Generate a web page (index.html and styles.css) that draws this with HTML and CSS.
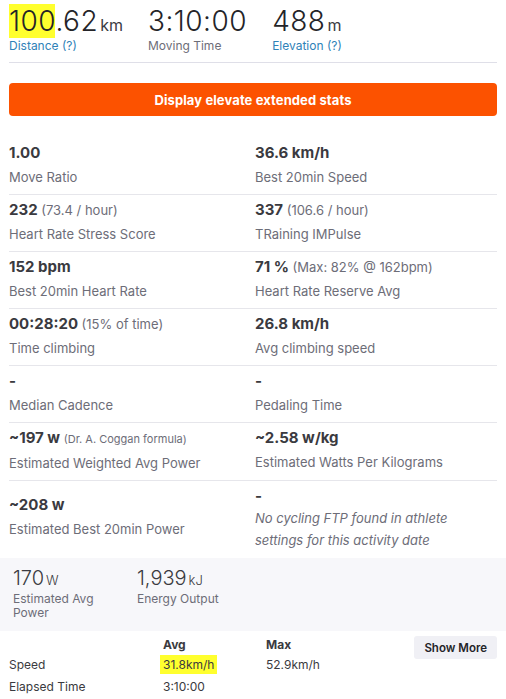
FILE: index.html
```html
<!DOCTYPE html>
<html>
<head>
<meta charset="utf-8">
<link rel="stylesheet" href="styles.css">
</head>
<body>
<div class="page">
  <ul class="top-stats">
    <li class="top-stat">
      <div class="big"><span class="hl">100</span>.62<abbr class="unit">km</abbr></div>
      <div class="top-label link">Distance (?)</div>
    </li>
    <li class="top-stat">
      <div class="big">3:10:00</div>
      <div class="top-label">Moving Time</div>
    </li>
    <li class="top-stat">
      <div class="big">488<abbr class="unit">m</abbr></div>
      <div class="top-label link">Elevation (?)</div>
    </li>
  </ul>

  <button class="elevate-btn">Display elevate extended stats</button>

  <div class="ext-grid">
    <div class="cell"><div class="val">1.00</div><div class="lab">Move Ratio</div></div>
    <div class="cell"><div class="val">36.6 km/h</div><div class="lab">Best 20min Speed</div></div>

    <div class="cell"><div class="val">232 <span class="sub">(73.4 / hour)</span></div><div class="lab">Heart Rate Stress Score</div></div>
    <div class="cell"><div class="val">337 <span class="sub">(106.6 / hour)</span></div><div class="lab">TRaining IMPulse</div></div>

    <div class="cell"><div class="val">152 bpm</div><div class="lab">Best 20min Heart Rate</div></div>
    <div class="cell"><div class="val">71 % <span class="sub">(Max: 82% @ 162bpm)</span></div><div class="lab">Heart Rate Reserve Avg</div></div>

    <div class="cell"><div class="val">00:28:20 <span class="sub">(15% of time)</span></div><div class="lab">Time climbing</div></div>
    <div class="cell"><div class="val">26.8 km/h</div><div class="lab">Avg climbing speed</div></div>

    <div class="cell"><div class="val">-</div><div class="lab">Median Cadence</div></div>
    <div class="cell"><div class="val">-</div><div class="lab">Pedaling Time</div></div>

    <div class="cell"><div class="val">~197 w <span class="sub small">(Dr. A. Coggan formula)</span></div><div class="lab">Estimated Weighted Avg Power</div></div>
    <div class="cell"><div class="val">~2.58 w/kg</div><div class="lab">Estimated Watts Per Kilograms</div></div>

    <div class="cell last middle"><div class="val">~208 w</div><div class="lab">Estimated Best 20min Power</div></div>
    <div class="cell last"><div class="val">-</div><div class="lab italic">No cycling FTP found in athlete settings for this activity date</div></div>
  </div>

  <ul class="secondary">
    <li class="sec-stat">
      <div class="sec-val">170<abbr class="sec-unit">W</abbr></div>
      <div class="sec-lab">Estimated Avg Power</div>
    </li>
    <li class="sec-stat">
      <div class="sec-val">1,939<abbr class="sec-unit">kJ</abbr></div>
      <div class="sec-lab">Energy Output</div>
    </li>
  </ul>

  <div class="splits">
    <div class="split-table">
      <div class="th"></div><div class="th">Avg</div><div class="th">Max</div>
      <div class="td name">Speed</div><div class="td"><span class="hl-small">31.8km/h</span></div><div class="td">52.9km/h</div>
      <div class="td name">Elapsed Time</div><div class="td">3:10:00</div><div class="td"></div>
    </div>
    <button class="more-btn">Show More</button>
  </div>
</div>
</body>
</html>
```

FILE: styles.css
```css
* { box-sizing: border-box; }
html, body { margin: 0; padding: 0; background: #fff; }
body {
  font-family: Inter, "Noto Sans", sans-serif;
  color: #242428;
}
.page { padding: 4px 9px 0 9px; }

.top-stats {
  list-style: none;
  margin: 0;
  padding: 0 0 8px 0;
  display: flex;
  gap: 25px;
  border-bottom: 1px solid #dfdfe8;
}
.big {
  font-size: 28px;
  font-weight: 300;
  line-height: 34px;
  color: #242428;
  letter-spacing: 0.5px;
}
.hl { background: #ffff2e; }
.unit {
  font-size: 16px;
  font-weight: 400;
  line-height: 1;
  margin-left: 2px;
  text-decoration: none;
  letter-spacing: 0;
  color: #3b3b42;
}
.top-label {
  font-size: 12px;
  line-height: 16px;
  color: #6d6d78;
}
.top-label.link { color: #2f82b8; }

.elevate-btn {
  display: block;
  width: 100%;
  margin: 20px 0 22px 0;
  height: 33px;
  border: 0;
  border-radius: 4px;
  background: #fc5200;
  color: #fff;
  font-family: Inter, "Noto Sans", sans-serif;
  font-weight: 700;
  font-size: 13px;
  letter-spacing: 0.1px;
}

.ext-grid {
  display: grid;
  grid-template-columns: 246px 1fr;
}
.cell {
  padding: 5px 0 7px 0;
  border-bottom: 1px solid #e6e6eb;
}
.cell.last { border-bottom: 0; }
.cell.middle { align-self: center; margin-top: -3px; }
.val {
  font-size: 15px;
  font-weight: 700;
  line-height: 20px;
  color: #3a3a40;
}
.sub {
  font-size: 13px;
  font-weight: 400;
  color: #6d6d78;
}
.sub.small { font-size: 11px; }
.lab {
  margin-top: 4px;
  font-size: 13px;
  line-height: 20px;
  color: #6d6d78;
}
.lab.italic {
  font-style: italic;
  line-height: 22px;
  margin-top: 1px;
  padding-right: 40px;
}

.secondary {
  list-style: none;
  margin: 0 -9px;
  padding: 8px 13px 11px 13px;
  background: #f7f7fa;
  display: flex;
  gap: 24px;
}
.sec-stat { width: 100px; }
.sec-val {
  font-size: 20px;
  font-weight: 300;
  line-height: 24px;
  color: #3a3a40;
}
.sec-unit {
  font-size: 13px;
  margin-left: 2px;
  text-decoration: none;
}
.sec-lab {
  font-size: 12px;
  line-height: 14px;
  color: #6d6d78;
}

.splits {
  display: flex;
  justify-content: space-between;
  align-items: flex-start;
  padding-top: 4px;
}
.split-table {
  display: grid;
  grid-template-columns: 154px 103px 100px;
  font-size: 12px;
}
.th {
  font-weight: 700;
  line-height: 19px;
  color: #3a3a40;
}
.td {
  line-height: 22px;
  color: #3a3a40;
}
.hl-small {
  background: #ffff2e;
  padding: 2px 3px;
  margin-left: -3px;
}
.more-btn {
  margin-top: 1px;
  height: 23px;
  padding: 0 10px;
  border: 0;
  border-radius: 3px;
  background: #f0f0f5;
  color: #242428;
  font-family: Inter, "Noto Sans", sans-serif;
  font-size: 11.5px;
  font-weight: 600;
}
```
